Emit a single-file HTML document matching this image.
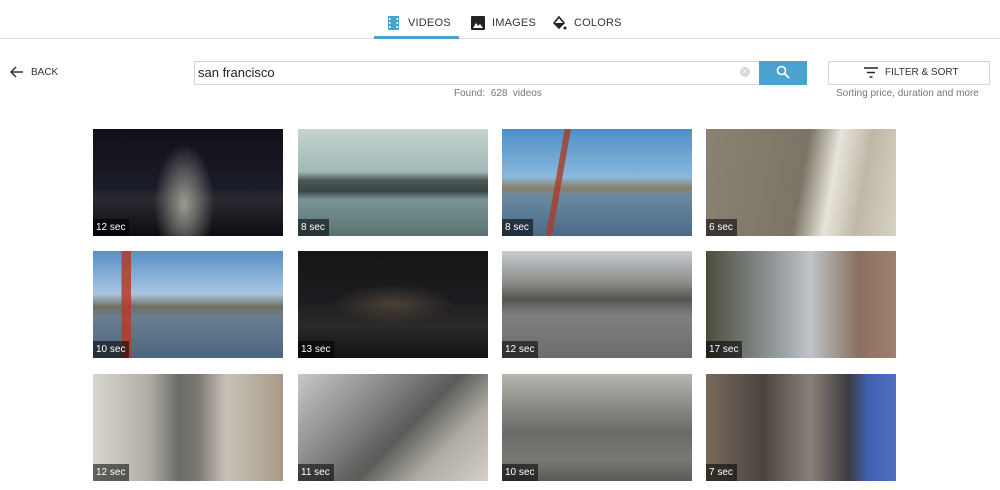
<!DOCTYPE html>
<html><head><style>
body{margin:0;width:1000px;height:490px;background:#fff;font-family:"Liberation Sans",sans-serif;position:relative;overflow:hidden}
.abs{position:absolute}
.tab{position:absolute;top:17px;font-size:11px;color:#333;letter-spacing:.2px}
.th{position:absolute;width:190px;height:107px;overflow:hidden}
.lab{position:absolute;left:0;bottom:0;background:rgba(0,0,0,.55);color:#fff;font-size:10px;padding:3px 4px 3px 3px}
</style></head><body>
<div class="abs" style="left:0;top:38px;width:1000px;height:1px;background:#e2e2e2"></div>
<div class="abs" style="left:374px;top:36px;width:85px;height:3px;background:#4aa3cf"></div>
<svg class="abs" style="left:388px;top:16px" width="11" height="14"><rect width="11" height="14" fill="#4aa3cf"/><g fill="#fff"><rect x="1" y="2" width="1.5" height="2"/><rect x="1" y="6" width="1.5" height="2"/><rect x="1" y="10" width="1.5" height="2"/><rect x="8.5" y="2" width="1.5" height="2"/><rect x="8.5" y="6" width="1.5" height="2"/><rect x="8.5" y="10" width="1.5" height="2"/></g></svg>
<div class="tab" style="left:408px">VIDEOS</div>
<svg class="abs" style="left:471px;top:16px" width="14" height="14"><rect width="14" height="14" rx="1" fill="#222"/><path d="M2 12 L5 7 L7 10 L9 8 L12 12Z" fill="#fff"/></svg>
<div class="tab" style="left:492px">IMAGES</div>
<svg class="abs" style="left:553px;top:16px" width="14" height="15"><path d="M6 1 L11 7 L6 12 L1 7Z" fill="none" stroke="#222" stroke-width="1.6"/><path d="M2 7 H10 L6 11Z" fill="#222"/><circle cx="12" cy="12" r="1.5" fill="#222"/></svg>
<div class="tab" style="left:574px">COLORS</div>

<svg class="abs" style="left:10px;top:66px" width="14" height="12"><path d="M13 6 H2 M6 1 L1 6 L6 11" fill="none" stroke="#333" stroke-width="1.5"/></svg>
<div class="abs" style="left:31px;top:67px;font-size:10px;color:#333">BACK</div>

<div class="abs" style="left:194px;top:61px;width:564px;height:22px;border:1px solid #d5d5d5;border-right:none;border-radius:2px 0 0 2px"></div>
<div class="abs" style="left:198px;top:65px;font-size:13px;color:#222">san francisco</div>
<div class="abs" style="left:740px;top:67px;width:10px;height:10px;border-radius:50%;background:#d8d8d8;color:#fff;font-size:8px;line-height:10px;text-align:center">×</div>
<div class="abs" style="left:759px;top:61px;width:48px;height:24px;background:#4aa3cf"></div>
<svg class="abs" style="left:776px;top:65px" width="14" height="14"><circle cx="5.5" cy="5.5" r="4" fill="none" stroke="#fff" stroke-width="1.6"/><path d="M8.5 8.5 L13 13" stroke="#fff" stroke-width="1.8"/></svg>
<div class="abs" style="left:454px;top:88px;font-size:10px;color:#777">Found:&nbsp; 628&nbsp; videos</div>

<div class="abs" style="left:828px;top:61px;width:160px;height:22px;border:1px solid #d5d5d5;border-radius:2px"></div>
<svg class="abs" style="left:864px;top:67px" width="14" height="11"><path d="M0 1H14M3 5.5H11M5.5 10H8.5" stroke="#222" stroke-width="1.6"/></svg>
<div class="abs" style="left:885px;top:67px;font-size:10px;color:#333">FILTER &amp; SORT</div>
<div class="abs" style="left:836px;top:88px;font-size:10px;color:#777">Sorting price, duration and more</div>

<div class="th" style="left:93px;top:129px;background:radial-gradient(ellipse 30px 60px at 48% 70%,#9a9a90,transparent),linear-gradient(#101018 0,#1a1c28 55%,#2a2a30 65%,#0c0c14)"><div class="lab">12 sec</div></div>
<div class="th" style="left:298px;top:129px;background:linear-gradient(#c4d4d0 0,#a0b8b6 40%,#4c5858 48%,#3a4444 58%,#7a9494 66%,#5a7272)"><div class="lab">8 sec</div></div>
<div class="th" style="left:502px;top:129px;background:linear-gradient(100deg,transparent 0,transparent 30%,rgba(170,60,40,.8) 30%,rgba(170,60,40,.8) 33%,transparent 33%),linear-gradient(#4e8fc6 0,#8ab8dc 45%,#8a8068 55%,#6c8aa0 62%,#4a6a88)"><div class="lab">8 sec</div></div>
<div class="th" style="left:706px;top:129px;background:linear-gradient(100deg,#8a8272 0,#7c7466 50%,#e8e4da 65%,#bfb8a8 80%,#d8d2c2)"><div class="lab">6 sec</div></div>

<div class="th" style="left:93px;top:251px;background:linear-gradient(90deg,transparent 0,transparent 15%,rgba(180,60,40,.85) 15%,rgba(180,60,40,.85) 20%,transparent 20%),linear-gradient(#5a8ec8 0,#a8c6e2 40%,#707060 52%,#6a7e92 62%,#4c6680)"><div class="lab">10 sec</div></div>
<div class="th" style="left:298px;top:251px;background:radial-gradient(ellipse 60px 20px at 50% 50%,#4a4036,transparent),linear-gradient(#161616 0,#1c1c20 45%,#2c2a28 70%,#121212)"><div class="lab">13 sec</div></div>
<div class="th" style="left:502px;top:251px;background:linear-gradient(#c8ccd0 0,#8a8c88 30%,#555550 45%,#7e8080 60%,#6a6c6e)"><div class="lab">12 sec</div></div>
<div class="th" style="left:706px;top:251px;background:linear-gradient(90deg,#4a4c3c 0,#9aa0a4 40%,#c0c4c8 55%,#8a7060 80%,#a08070),linear-gradient(#fff,#fff)"><div class="lab">17 sec</div></div>

<div class="th" style="left:93px;top:374px;background:linear-gradient(90deg,#d8d6d0 0,#b0aca4 30%,#6a6c68 45%,#7a7670 55%,#c8c2b8 70%,#a89a88)"><div class="lab">12 sec</div></div>
<div class="th" style="left:298px;top:374px;background:linear-gradient(135deg,#c8c8c8 0,#7a7a78 40%,#5a5a58 55%,#b0aca4 75%,#d4d0c8)"><div class="lab">11 sec</div></div>
<div class="th" style="left:502px;top:374px;background:linear-gradient(#b8b6b0 0,#8a8a86 30%,#6a6a68 55%,#7a7874 80%,#5a5a58)"><div class="lab">10 sec</div></div>
<div class="th" style="left:706px;top:374px;background:linear-gradient(90deg,#7a6a5a 0,#4a4440 30%,#8a8078 55%,#3c3a40 75%,#4060b0 85%,#5070c0)"><div class="lab">7 sec</div></div>
</body></html>
